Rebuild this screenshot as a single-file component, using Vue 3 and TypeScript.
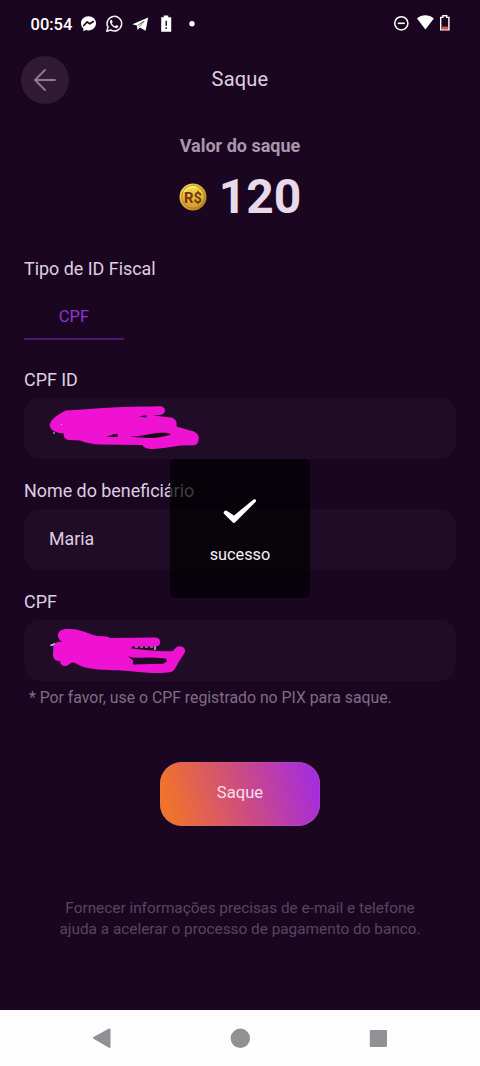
<script setup lang="ts">
interface Field {
  id: string
  label: string
  value: string
}

const fields: Field[] = [
  { id: 'cpf-id', label: 'CPF ID', value: '' },
  { id: 'name', label: 'Nome do beneficiário', value: 'Maria' },
  { id: 'cpf', label: 'CPF', value: '1' },
]
</script>

<template>
  <div class="screen">
    <header class="status">
      <span class="clock">00:54</span>
      <svg class="status-left" width="116" height="24" viewBox="80 12 116 24">
        <path d="M88.500 16.200c-4.300 0-7.500 3-7.500 7.100 0 2.200.9 4 2.400 5.300v2.600l2.500-1.200c.8.300 1.700.4 2.600.4 4.300 0 7.500-3 7.500-7.100s-3.200-7.100-7.500-7.100z" fill="#fff" />
        <path d="M83.800 25.500l3.400-3.700 2.600 2 3.400-2.300" fill="none" stroke="#1a0820" stroke-width="1.700" stroke-linecap="round" stroke-linejoin="round" />
        <path d="M106.800 31.200l1.200-4a7.300 7.300 0 1 1 2.800 2.800z" fill="none" stroke="#f3edf5" stroke-width="1.500" stroke-linejoin="round" />
        <path d="M110.900 19.800c-1.200.9-1.200 2.400-.4 3.900 1.200 2.200 3 3.800 5.200 4.400 1.400.3 2.700-.5 2.700-2l-2.100-1.100-1.200 1.300c-1.600-.7-2.600-1.600-3.300-3l.9-1.200-.8-2.200z" fill="#f3edf5" />
        <path d="M132.400 24.200l15.800-6.800-2.600 13.400-5.700-3.400-2.300 2.600-.8-4.400z" fill="#fff" />
        <path d="M137.500 25.300l6.500-4-4.900 5.500" fill="none" stroke="#1a0820" stroke-width=".6" />
        <path d="M161.200 17.200h2.500v-1.700h4.600v1.700h2.900v14.600h-10z" fill="#fff" />
        <path d="M166.200 20.700v5M166.200 27.300v1.800" stroke="#1a0820" stroke-width="1.400" />
        <circle cx="192" cy="23.700" r="2.700" fill="#fff" />
      </svg>
      <svg class="status-right" width="60" height="24" viewBox="392 12 60 24">
        <circle cx="401.300" cy="23.300" r="6.600" fill="none" stroke="#fff" stroke-width="1.500" />
        <path d="M397.800 23.300h7" stroke="#fff" stroke-width="1.600" />
        <path d="M417 18.400c4.800-4.200 11.800-4.200 16.800 0l-8.400 11.200z" fill="#fff" />
        <path d="M440.700 17.400h2.200v-1.600h3.800v1.600h2.200v12.500h-8.200z" fill="none" stroke="#fff" stroke-width="1.400" />
        <path d="M441.700 26.600h6.200v2.700h-6.200z" fill="#df5540" />
      </svg>
    </header>

    <div class="topbar">
      <button class="back" aria-label="Voltar">
        <svg width="48" height="48" viewBox="0 0 48 48">
          <path d="M34 24H14.500M24 14L14 24l10 10" fill="none" stroke="#8d7c93" stroke-width="1.800" stroke-linecap="round" stroke-linejoin="round" />
        </svg>
      </button>
      <h1>Saque</h1>
    </div>

    <section class="amount">
      <p>Valor do saque</p>
      <div class="total">
        <svg class="coin" width="28" height="28" viewBox="0 0 28 28">
          <defs>
            <linearGradient id="rim" x1="0" y1="0" x2="1" y2="1">
              <stop offset="0" stop-color="#f7e64a" />
              <stop offset=".55" stop-color="#d9a92b" />
              <stop offset="1" stop-color="#a86b20" />
            </linearGradient>
            <linearGradient id="face" x1="0" y1="0" x2="0" y2="1">
              <stop offset="0" stop-color="#f4dc4c" />
              <stop offset="1" stop-color="#d39a2d" />
            </linearGradient>
          </defs>
          <circle cx="14" cy="14" r="13.500" fill="url(#rim)" />
          <circle cx="14" cy="14" r="11.300" fill="url(#face)" stroke="#a9721d" stroke-width=".8" />
          <path d="M5 9a10.500 10.500 0 0 1 13-4.500" fill="none" stroke="#fff6a0" stroke-width="1.200" />
          <text x="14" y="19.600" text-anchor="middle" textLength="18" lengthAdjust="spacingAndGlyphs">R$</text>
        </svg>
        <strong>120</strong>
      </div>
    </section>

    <main class="form">
      <h2>Tipo de ID Fiscal</h2>
      <div class="tab">CPF</div>

      <div v-for="field in fields" :key="field.id" class="field">
        <label>{{ field.label }}</label>
        <div class="box">
          <span>{{ field.value }}</span>
          <svg v-if="field.id === 'cpf-id'" class="scribble" width="220" height="60" viewBox="20 399 220 60">
            <path fill="#f012d2" d="M66 410.500L82 409.500C110 407 136 406.500 160 406.200C166 406 167 413.500 161 414.800L153 415.500L171 417.500C175 418 177.500 422 176.500 426.500L190 430.500C197 431.500 200 436 198.500 440C198 443 197 445 194 445.200L180 445.500C168 447.500 158 449.500 149 448.700C145 448.300 143 446.500 142.500 445L102 444.500C93 444.300 86 443 80 440.500L69 440C65 439.500 63 436.500 64 433.500C54 433 49 429 49.800 424C52 418 59 414 66 410.500Z" />
            <path fill="#170719" d="M139 416.200l8-1-2 1.300 3 .1-3 1zM106.500 437l7-2.800 4-.4.3 2.900zM129 436.800c12-.2 18-2.600 26-3.500 8-.9 15-.5 16 1.200-7 2.300-13 3.500-22 3.600z" />
            <path stroke="#dacbdc" d="M54 432v2M61.500 424v1" />
          </svg>
          <svg v-if="field.id === 'cpf'" class="scribble" width="220" height="60" viewBox="20 621 220 60">
            <path stroke="#d6c5dc" stroke-width="1.200" stroke-dasharray="3 2" d="M135 647h21" />
            <path stroke="#d6c5dc" stroke-width="1.400" d="M155 645v5" />
            <path fill="#f012d2" fill-rule="evenodd" d="M68 629C78 628 89 634 97 636L107 636.500L110 638L154 637.500C162 637 162 646 156 646.500L132 646.500L131 648.500C143 649.500 160 652 173 651L176 647.500C181 644 187 648 184.500 653L181 658.500C177 663 176 671 170 672.300C159 674 143 672.500 133 671.500C111 669 90 672 76 663.500C71 660.500 70 665 66 666C62 666 60 664 60 661C54 661.500 52 656 53.500 652L54 645C55 642 59 642 62 641.500C57 639 57 633 60 631C62 629.500 65 629 68 629ZM128 656.200L133 660.500V664.500L163 663.800L167 661.500L166 658.500L153 657.500L134 657.800Z" />
          </svg>
        </div>
      </div>
      <p class="hint">* Por favor, use o CPF registrado no PIX para saque.</p>
    </main>

    <button class="submit">Saque</button>
    <p class="note">Fornecer informações precisas de e-mail e telefone<br />ajuda a acelerar o processo de pagamento do banco.</p>

    <nav class="navbar">
      <svg width="480" height="56" viewBox="0 0 480 56">
        <g fill="#929094" stroke="#929094" stroke-width="2" stroke-linejoin="round">
          <path d="M94 28l15.500-8.500v17.500z" />
          <circle cx="240.300" cy="28.300" r="8.700" />
          <path d="M370.800 21h15.200v15h-15.200z" />
        </g>
      </svg>
    </nav>

    <div class="toast" role="status">
      <svg width="36" height="28" viewBox="0 0 36 28">
        <path d="M2 14.700Q3.500 12.500 5.500 14.300L12 18.500L31.500 2.500Q34.500 1.500 34 4.500L13 25.500Q11.500 26.500 10.300 25L2 16.800Q1.300 15.700 2 14.700Z" fill="#fff" />
      </svg>
      <span>sucesso</span>
    </div>
  </div>
</template>

<style>
body {
  margin: 0;
  background: #1a0620;
}
</style>

<style scoped>
.screen {
  position: relative;
  box-sizing: border-box;
  display: flex;
  flex-direction: column;
  width: 480px;
  height: 1066px;
  overflow: hidden;
  background: #1a0620;
  color: #dfcfe2;
  font-family: Roboto, sans-serif;
}
h1, h2, p {
  margin: 0;
  font-weight: 400;
}
button {
  border: 0;
  padding: 0;
  font: inherit;
}
.status {
  display: flex;
  align-items: center;
  height: 24px;
  padding: 12px 28px 0 30.5px;
}
.clock {
  width: 49.5px;
  font-size: 16.5px;
  font-weight: 500;
  color: #fff;
}
.status-right {
  margin-left: auto;
}
.topbar {
  display: grid;
  grid-template-columns: 48px 1fr 48px;
  align-items: center;
  height: 48px;
  margin: 20px 21px 0;
}
.back {
  width: 48px;
  height: 48px;
  border-radius: 50%;
  background: #301a36;
}
.back svg {
  display: block;
}
h1 {
  font-size: 20px;
  line-height: 24px;
  letter-spacing: .2px;
  text-align: center;
  margin-top: -2px;
}
.amount {
  height: 121px;
  margin-top: 30px;
  text-align: center;
}
.amount p {
  font-size: 18px;
  font-weight: 700;
  line-height: 24px;
  color: #a897ae;
}
.total {
  display: flex;
  align-items: center;
  justify-content: center;
  gap: 12px;
  height: 60px;
  margin-top: 9px;
}
.total strong {
  font-size: 48px;
  line-height: 56px;
  color: #e8daea;
}
.coin text {
  font: bold 15.5px Roboto, sans-serif;
  fill: #763514;
}
.form {
  height: 455px;
  padding: 0 24px;
  margin-top: 2px;
}
h2, label {
  display: block;
  font-size: 17.9px;
  line-height: 24px;
}
.tab {
  box-sizing: border-box;
  width: 100px;
  height: 59px;
  border-bottom: 2px solid #4f1773;
  font-size: 16.5px;
  line-height: 71px;
  text-align: center;
  color: #9233d4;
  margin-bottom: 28px;
}
.field {
  height: 111px;
}
.box {
  position: relative;
  box-sizing: border-box;
  height: 61px;
  margin-top: 6px;
  padding-left: 25px;
  border-radius: 16px;
  background: #200c27;
  font-size: 17.8px;
  line-height: 59px;
}
.scribble {
  position: absolute;
  top: 1px;
  left: -4px;
}
.hint {
  margin: -15px 0 0 5px;
  font-size: 15.8px;
  line-height: 24px;
  color: #806c87;
}
.submit {
  flex: none;
  align-self: center;
  width: 160px;
  height: 64px;
  margin-top: 49.5px;
  padding-bottom: 2px;
  border-radius: 22px;
  background: linear-gradient(75deg, #ef722d 8%, #cb4a86 54%, #a62ddb 94%);
  box-shadow: inset 0 0 1px #ef8bd0;
  color: #f9dfee;
  font-size: 16.6px;
}
.note {
  margin-top: 72.5px;
  text-align: center;
  font-size: 15.35px;
  line-height: 21px;
  color: #594560;
}
.navbar {
  height: 56px;
  margin-top: auto;
  background: #fefdfe;
}
.navbar svg {
  display: block;
}
.toast {
  position: absolute;
  top: 459px;
  left: 170px;
  display: flex;
  flex-direction: column;
  align-items: center;
  box-sizing: border-box;
  width: 140px;
  height: 139px;
  padding-top: 38px;
  border-radius: 6px;
  background: rgba(0, 0, 0, .72);
  color: #f5f2f6;
  font-size: 16.3px;
  line-height: 22px;
}
.toast span {
  margin-top: 19px;
}
</style>
